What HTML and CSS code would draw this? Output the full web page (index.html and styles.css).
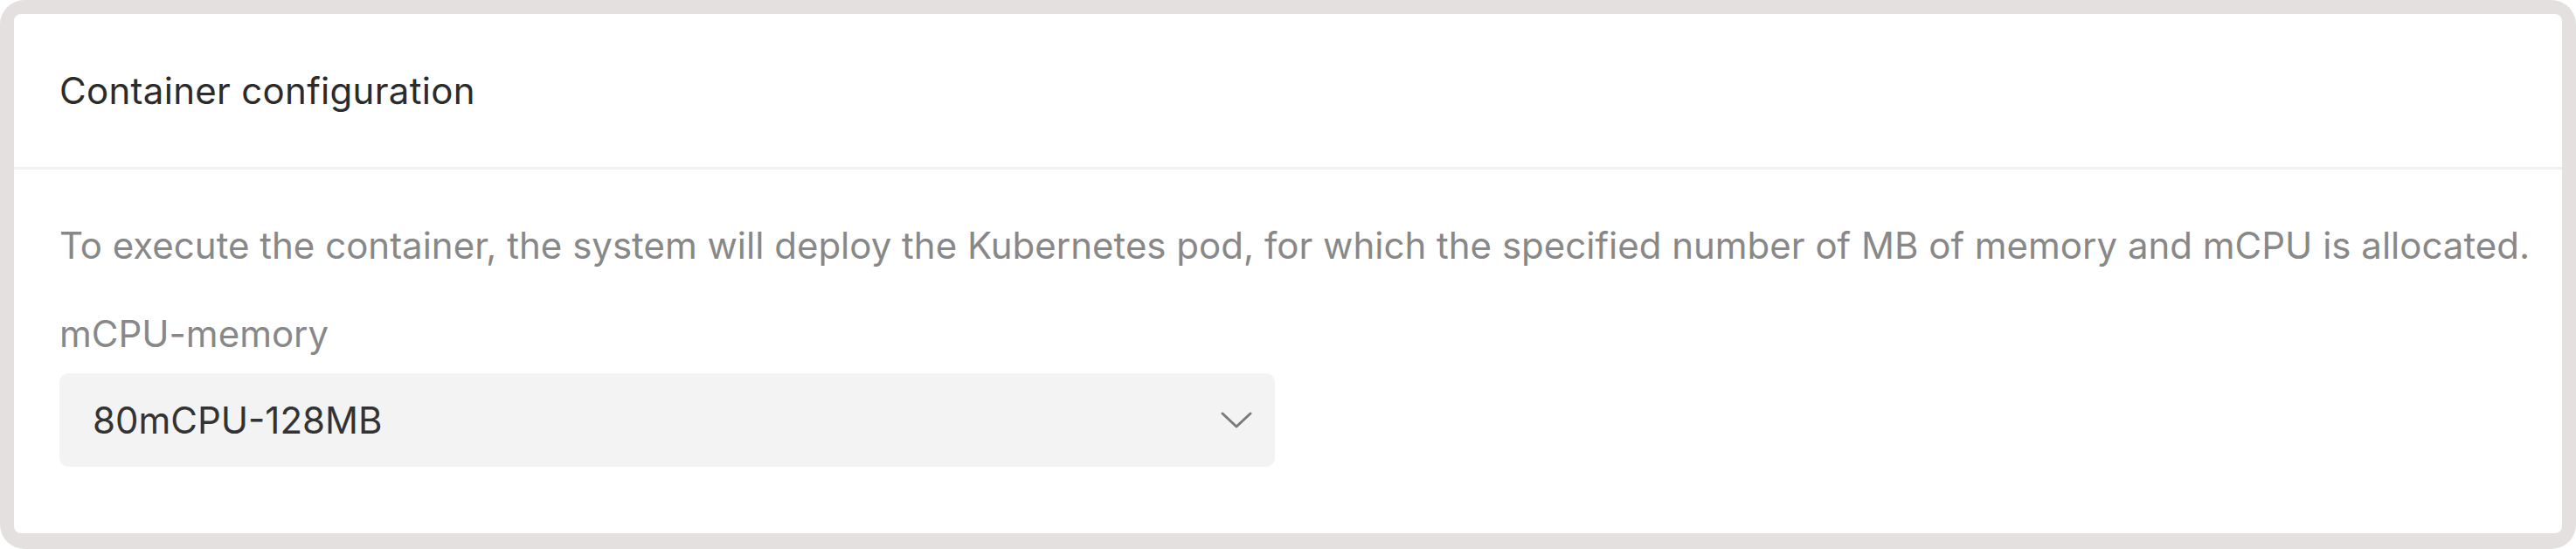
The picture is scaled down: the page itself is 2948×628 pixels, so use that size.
FILE: index.html
```html
<!DOCTYPE html>
<html lang="en">
<head>
<meta charset="utf-8">
<title>Container configuration</title>
<link rel="stylesheet" href="styles.css">
</head>
<body>
<div class="frame">
  <section class="card">
    <header class="card-header">
      <h2 class="card-title">Container configuration</h2>
    </header>
    <div class="card-body">
      <p class="description">To execute the container, the system will deploy the Kubernetes pod, for which the specified number of MB of memory and mCPU is allocated.</p>
      <div class="field">
        <label class="field-label">mCPU-memory</label>
        <div class="select">
          <span class="select-value">80mCPU-128MB</span>
          <svg class="chevron" width="36" height="20" viewBox="0 0 36 20" fill="none">
            <path d="M2 2 L18 17 L34 2" stroke="#7a7a7a" stroke-width="3" stroke-linecap="round" stroke-linejoin="round"/>
          </svg>
        </div>
      </div>
    </div>
  </section>
</div>
</body>
</html>
```
FILE: styles.css
```css
* { box-sizing: border-box; }
html, body { margin: 0; padding: 0; }
body {
  width: 2948px;
  height: 628px;
  background: #ffffff;
  font-family: Inter, "Noto Sans", sans-serif;
}
.frame {
  width: 2948px;
  height: 628px;
  background: #e3e0df;
  border-radius: 28px;
  padding: 16px 16px 18px 16px;
}
.card {
  background: #ffffff;
  border-radius: 8px;
  height: 100%;
  display: flex;
  flex-direction: column;
}
.card-header {
  height: 178px;
  border-bottom: 3px solid #f2f1f0;
  display: flex;
  align-items: center;
  padding: 0 52px;
}
.card-title {
  margin: 0;
  font-size: 42px;
  font-weight: 400;
  letter-spacing: 0.3px;
  color: #2b2b2b;
}
.card-body {
  padding: 62px 24px 0 52px;
}
.description {
  margin: 0;
  font-size: 42px;
  color: #888888;
  line-height: 50px;
  white-space: nowrap;
}
.field {
  margin-top: 51px;
  display: flex;
  flex-direction: column;
}
.field-label {
  font-size: 42px;
  color: #888888;
  line-height: 50px;
}
.select {
  margin-top: 20px;
  width: 1391px;
  height: 107px;
  background: #f3f3f3;
  border-radius: 10px;
  display: flex;
  align-items: center;
  justify-content: space-between;
  padding: 0 26px 0 38px;
}
.select-value {
  font-size: 42px;
  color: #333333;
}
.chevron { display: block; }
```
